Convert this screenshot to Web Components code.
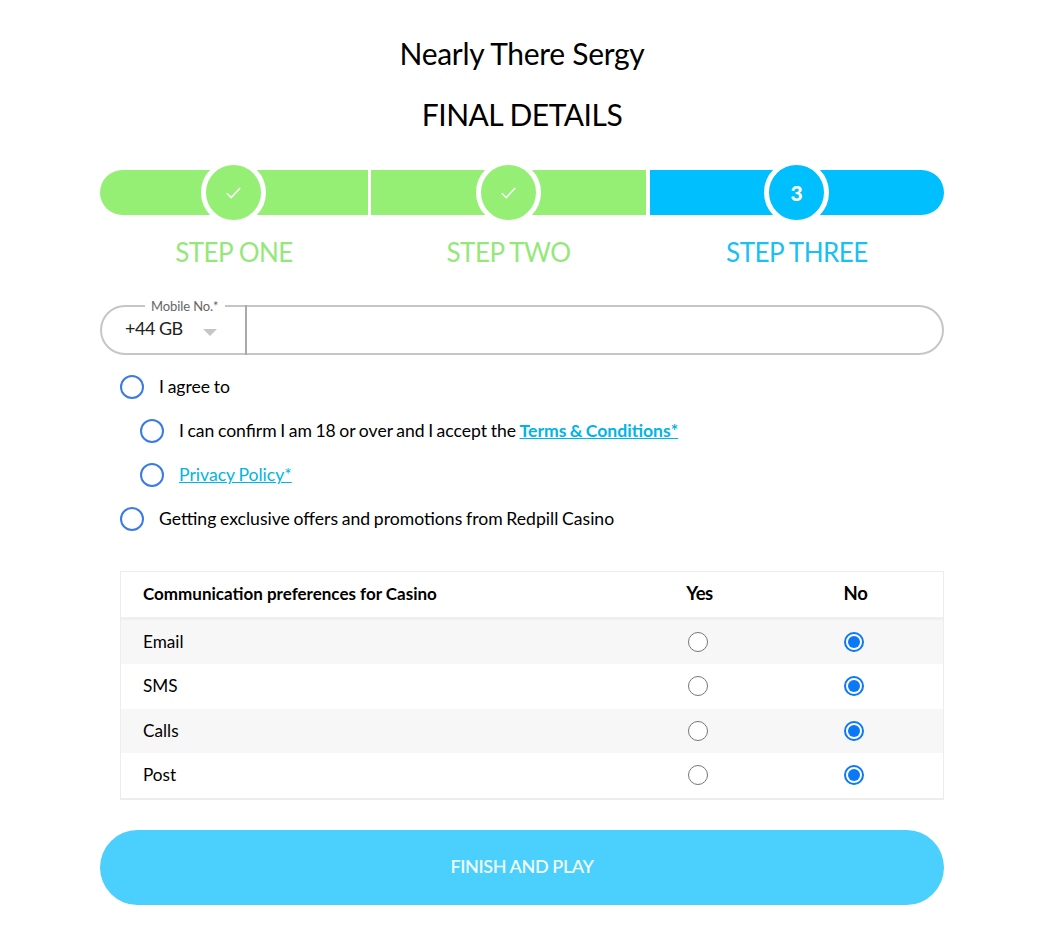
<!DOCTYPE html>
<html lang="en">
<head>
<meta charset="utf-8">
<title>Final details</title>
<style>
  html, body { margin: 0; background: #fff; }
  body { font-family: Lato, "Liberation Sans", sans-serif; color: #000; }
</style>
</head>
<body>
<signup-form>
  <form-title slot="head" top="35" bottom="25" spacing="-.3">Nearly There Sergy</form-title>
  <form-title slot="head" top="0" bottom="0" spacing="-.5">FINAL DETAILS</form-title>

  <step-bar>
    <step-item width="268" state="done" first label="STEP ONE"></step-item>
    <step-item width="275" state="done" label="STEP TWO"></step-item>
    <step-item width="294" state="current" last number="3" label="STEP THREE" style="margin-left:1px"></step-item>
  </step-bar>

  <phone-field label="Mobile No.*" code="+44 GB"></phone-field>

  <check-list>
    <check-row>I agree to</check-row>
    <check-row indent style="word-spacing:-1px">I can confirm I am 18 or over and I accept the <a href="#" style="color:#00b4e6;font-weight:700">Terms &amp; Conditions*</a></check-row>
    <check-row indent><a href="#" style="color:#00b4e6">Privacy Policy*</a></check-row>
    <check-row>Getting exclusive offers and promotions from Redpill Casino</check-row>
  </check-list>

  <pref-table heading="Communication preferences for Casino">
    <pref-row>Email</pref-row>
    <pref-row>SMS</pref-row>
    <pref-row>Calls</pref-row>
    <pref-row>Post</pref-row>
  </pref-table>

  <finish-button>FINISH AND PLAY</finish-button>
</signup-form>

<script>
// Page shell: keeps everything in the 844px column
class SignupForm extends HTMLElement {
  constructor() {
    super();
    this.attachShadow({ mode: 'open' });
    this.shadowRoot.innerHTML = `
      <style>
        :host { display: block; width: 844px; margin: 0 auto; padding-bottom: 46px; }
      </style>
      <slot name="head"></slot>
      <slot></slot>
    `;
  }
}

class FormTitle extends HTMLElement {
  constructor() {
    super();
    this.attachShadow({ mode: 'open' });
  }
  connectedCallback() {
    const top = this.getAttribute('top') || 0;
    const bottom = this.getAttribute('bottom') || 0;
    const spacing = this.getAttribute('spacing') || 0;
    this.shadowRoot.innerHTML = `
      <style>
        :host {
          display: block;
          text-align: center;
          font-size: 30px;
          line-height: 36px;
          letter-spacing: ${spacing}px;
          color: #000;
          padding: ${top}px 0 ${bottom}px;
        }
      </style>
      <slot></slot>
    `;
  }
}

class StepBar extends HTMLElement {
  constructor() {
    super();
    this.attachShadow({ mode: 'open' });
    this.shadowRoot.innerHTML = `
      <style>
        :host { display: flex; gap: 3px; margin-top: 38px; }
      </style>
      <slot></slot>
    `;
  }
}

class StepItem extends HTMLElement {
  constructor() {
    super();
    this.attachShadow({ mode: 'open' });
  }
  connectedCallback() {
    const done = this.getAttribute('state') === 'done';
    const color = done ? '#94ef74' : '#00bfff';
    const textColor = done ? '#94e87a' : '#18c0f4';
    const left = this.hasAttribute('first') ? '23px' : '0';
    const right = this.hasAttribute('last') ? '23px' : '0';
    const mark = done
      ? `<svg width="15" height="12" viewBox="0 0 15 12" fill="none" stroke="#fff" stroke-width="1.6"><path d="M.8 6.2 L5.2 10.6 L14.2 1"/></svg>`
      : `<span class="num">${this.getAttribute('number')}</span>`;
    this.shadowRoot.innerHTML = `
      <style>
        :host { display: block; width: ${this.getAttribute('width')}px; flex: none; }
        .track {
          height: 45px;
          background: ${color};
          border-radius: ${left} ${right} ${right} ${left};
          display: flex;
          align-items: center;
          justify-content: center;
        }
        :host([first]) .track, :host([last]) .track { padding-right: 1px; }
        .dot {
          box-sizing: content-box;
          width: 55px;
          height: 55px;
          flex: none;
          border: 5px solid #fff;
          border-radius: 50%;
          background: ${color};
          display: flex;
          align-items: center;
          justify-content: center;
        }
        .num { color: #fff; font-size: 21px; font-weight: 900; }
        .label {
          margin-top: 19px;
          text-align: center;
          font-size: 26px;
          line-height: 36px;
          letter-spacing: -.5px;
          color: ${textColor};
        }
      </style>
      <div class="track"><div class="dot">${mark}</div></div>
      <div class="label">${this.getAttribute('label')}</div>
    `;
  }
}

class PhoneField extends HTMLElement {
  constructor() {
    super();
    this.attachShadow({ mode: 'open' });
  }
  connectedCallback() {
    this.shadowRoot.innerHTML = `
      <style>
        :host {
          display: flex;
          position: relative;
          box-sizing: border-box;
          height: 50px;
          margin-top: 35px;
          border: 2px solid #c6c6c6;
          border-radius: 25px;
          color: #222;
        }
        .code {
          box-sizing: border-box;
          width: 145px;
          flex: none;
          display: flex;
          align-items: center;
          margin: -2px 0;
          padding: 0 0 4px 23px;
          font-size: 18px;
          letter-spacing: -.5px;
          border-right: 2px solid #aaa;
        }
        .arrow {
          width: 0;
          height: 0;
          margin: 8px 0 0 20px;
          border: 7px solid transparent;
          border-bottom: 0;
          border-top-color: #c6c6c6;
        }
        .label {
          position: absolute;
          top: -9px;
          left: 43px;
          padding: 0 6px;
          background: #fff;
          font-size: 13px;
          line-height: 16px;
          letter-spacing: -.1px;
          color: #666;
        }
      </style>
      <span class="label">${this.getAttribute('label')}</span>
      <div class="code">${this.getAttribute('code')}<span class="arrow"></span></div>
    `;
  }
}

class CheckList extends HTMLElement {
  constructor() {
    super();
    this.attachShadow({ mode: 'open' });
    this.shadowRoot.innerHTML = `
      <style>
        :host { display: flex; flex-direction: column; gap: 20px; margin-top: 20px; padding-left: 20px; }
      </style>
      <slot></slot>
    `;
  }
}

class CheckRow extends HTMLElement {
  constructor() {
    super();
    this.attachShadow({ mode: 'open' });
    this.shadowRoot.innerHTML = `
      <style>
        :host {
          display: flex;
          align-items: center;
          gap: 15px;
          height: 24px;
          font-size: 17.6px;
          word-spacing: -.8px;
          color: #000;
        }
        :host([indent]) { padding-left: 20px; }
        .box {
          box-sizing: border-box;
          flex: none;
          width: 24px;
          height: 24px;
          border: 2px solid #3a7be6;
          border-radius: 50%;
        }
        .text { padding-bottom: 1px; }
      </style>
      <span class="box"></span>
      <span class="text"><slot></slot></span>
    `;
  }
}

class PrefTable extends HTMLElement {
  constructor() {
    super();
    this.attachShadow({ mode: 'open' });
  }
  connectedCallback() {
    this.shadowRoot.innerHTML = `
      <style>
        :host {
          display: block;
          box-sizing: border-box;
          margin: 40px 0 0 20px;
          border: 1px solid #ededed;
          border-bottom-width: 2px;
        }
        .head {
          display: grid;
          grid-template-columns: 1fr 156px 156px;
          align-items: center;
          box-sizing: border-box;
          height: 47.7px;
          padding: 0 11px 2px 22px;
          border-bottom: 3px solid #efefef;
          font-weight: 700;
          font-size: 17px;
        }
        .head span + span {
          text-align: center;
          font-size: 18.5px;
          letter-spacing: -.4px;
          padding: 0 0 1px 3px;
        }
        ::slotted(pref-row:nth-child(odd)) { background: #f7f7f7; }
      </style>
      <div class="head">
        <span>${this.getAttribute('heading')}</span>
        <span>Yes</span>
        <span>No</span>
      </div>
      <slot></slot>
    `;
  }
}

class PrefRow extends HTMLElement {
  constructor() {
    super();
    this.attachShadow({ mode: 'open' });
    this.shadowRoot.innerHTML = `
      <style>
        :host {
          display: grid;
          grid-template-columns: 1fr 156px 156px;
          align-items: center;
          height: 44.5px;
          padding: 0 11px 0 22px;
          font-size: 17.2px;
        }
        .name { padding-bottom: 1px; }
        .radio {
          box-sizing: border-box;
          justify-self: center;
          width: 20px;
          height: 20px;
          border-radius: 50%;
          border: 1.5px solid #767676;
          background: #fff;
        }
        .radio.on {
          border: 2px solid #0b78f5;
          display: flex;
          align-items: center;
          justify-content: center;
        }
        .radio.on::after {
          content: '';
          width: 12px;
          height: 12px;
          border-radius: 50%;
          background: #0b78f5;
        }
      </style>
      <span class="name"><slot></slot></span>
      <span class="radio"></span>
      <span class="radio on"></span>
    `;
  }
}

class FinishButton extends HTMLElement {
  constructor() {
    super();
    this.attachShadow({ mode: 'open' });
    this.shadowRoot.innerHTML = `
      <style>
        :host {
          display: flex;
          align-items: center;
          justify-content: center;
          box-sizing: border-box;
          height: 75px;
          margin-top: 30px;
          padding-bottom: 2px;
          border-radius: 38px;
          background: #4bcffd;
          color: rgba(255, 255, 255, .92);
          font-size: 18px;
          font-weight: 600;
          letter-spacing: -.4px;
        }
      </style>
      <slot></slot>
    `;
  }
}

customElements.define('signup-form', SignupForm);
customElements.define('form-title', FormTitle);
customElements.define('step-bar', StepBar);
customElements.define('step-item', StepItem);
customElements.define('phone-field', PhoneField);
customElements.define('check-list', CheckList);
customElements.define('check-row', CheckRow);
customElements.define('pref-table', PrefTable);
customElements.define('pref-row', PrefRow);
customElements.define('finish-button', FinishButton);
</script>
</body>
</html>
